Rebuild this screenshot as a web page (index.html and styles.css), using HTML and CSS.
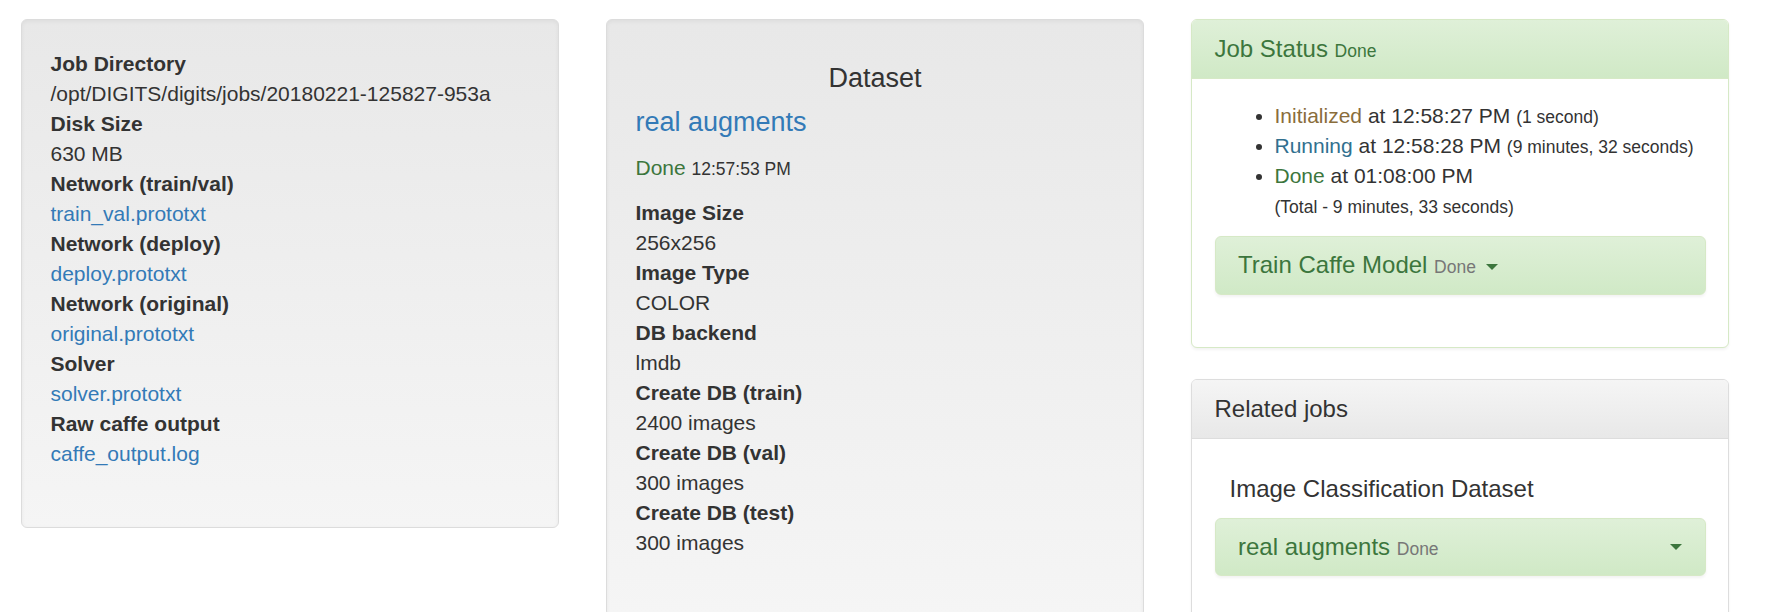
FILE: index.html
```html
<!DOCTYPE html>
<html>
<head>
<meta charset="utf-8">
<title>Job</title>
<link rel="stylesheet" href="styles.css">
</head>
<body>
<div class="page">
  <div class="col">
    <div class="well">
      <dl class="info">
        <dt>Job Directory</dt>
        <dd>/opt/DIGITS/digits/jobs/20180221-125827-953a</dd>
        <dt>Disk Size</dt>
        <dd>630 MB</dd>
        <dt>Network (train/val)</dt>
        <dd><a href="#">train_val.prototxt</a></dd>
        <dt>Network (deploy)</dt>
        <dd><a href="#">deploy.prototxt</a></dd>
        <dt>Network (original)</dt>
        <dd><a href="#">original.prototxt</a></dd>
        <dt>Solver</dt>
        <dd><a href="#">solver.prototxt</a></dd>
        <dt>Raw caffe output</dt>
        <dd><a href="#">caffe_output.log</a></dd>
      </dl>
    </div>
  </div>
  <div class="col">
    <div class="well">
      <h4 class="well-title">Dataset</h4>
      <h4 class="dataset-name"><a href="#">real augments</a></h4>
      <p class="status-line"><span class="text-success">Done</span> <small>12:57:53 PM</small></p>
      <dl class="info">
        <dt>Image Size</dt>
        <dd>256x256</dd>
        <dt>Image Type</dt>
        <dd>COLOR</dd>
        <dt>DB backend</dt>
        <dd>lmdb</dd>
        <dt>Create DB (train)</dt>
        <dd>2400 images</dd>
        <dt>Create DB (val)</dt>
        <dd>300 images</dd>
        <dt>Create DB (test)</dt>
        <dd>300 images</dd>
      </dl>
    </div>
  </div>
  <div class="col">
    <div class="panel panel-success status-panel">
      <div class="panel-heading">
        <h3 class="panel-title">Job Status <small>Done</small></h3>
      </div>
      <div class="panel-body">
        <ul class="status-list">
          <li><span class="text-warning">Initialized</span> at 12:58:27 PM <small>(1 second)</small></li>
          <li><span class="text-info">Running</span> at 12:58:28 PM <small>(9 minutes, 32 seconds)</small></li>
          <li><span class="text-success">Done</span> at 01:08:00 PM<br><small>(Total - 9 minutes, 33 seconds)</small></li>
        </ul>
        <div class="task-box">
          <span class="task-name">Train Caffe Model</span> <small>Done</small> <span class="caret"></span>
        </div>
      </div>
    </div>
    <div class="panel panel-default">
      <div class="panel-heading">
        <h3 class="panel-title">Related jobs</h3>
      </div>
      <div class="panel-body">
        <h4 class="related-type">Image Classification Dataset</h4>
        <div class="task-box task-box-split">
          <span><span class="task-name">real augments</span> <small>Done</small></span>
          <span class="caret"></span>
        </div>
      </div>
    </div>
  </div>
</div>
</body>
</html>
```
FILE: styles.css
```css
* {
  box-sizing: border-box;
}

html, body {
  margin: 0;
  padding: 0;
  background: #fff;
}

body {
  font-family: "Liberation Sans", Arial, sans-serif;
  font-size: 21px;
  line-height: 30px;
  color: #333;
}

a {
  color: #337ab7;
  text-decoration: none;
}

small {
  font-size: 17.5px;
  line-height: 1;
}

.page {
  display: flex;
  align-items: flex-start;
  gap: 47px;
  padding: 19px 41px 0 21px;
}

.col {
  flex: 0 0 538px;
  width: 538px;
}

.well {
  padding: 28.5px;
  border: 1px solid #dcdcdc;
  border-radius: 6px;
  background: linear-gradient(to bottom, #e8e8e8 0%, #f5f5f5 100%);
  box-shadow: inset 0 1.5px 4.5px rgba(0, 0, 0, 0.05), 0 1.5px 0 rgba(255, 255, 255, 0.1);
}

.info {
  margin: 0 0 30px;
}

.info dt {
  font-weight: bold;
}

.info dd {
  margin: 0;
}

.well-title,
.dataset-name {
  font-size: 27px;
  font-weight: normal;
  line-height: 1.1;
  margin: 15px 0;
}

.well-title {
  text-align: center;
}

.status-line {
  margin: 0 0 15px;
}

.status-line small {
  color: #333;
}

.text-success {
  color: #3c763d;
}

.text-warning {
  color: #8a6d3b;
}

.text-info {
  color: #31708f;
}

.panel {
  background: #fff;
  border: 1px solid #ddd;
  border-radius: 6px;
  margin-bottom: 30px;
  box-shadow: 0 1.5px 3px rgba(0, 0, 0, 0.05);
}

.status-panel {
  margin-bottom: 30.5px;
}

.panel-heading {
  padding: 16px 22.5px 15.5px;
  border-bottom: 1px solid #ddd;
  border-radius: 5px 5px 0 0;
}

.panel-title {
  margin: 0;
  font-size: 24px;
  font-weight: normal;
  line-height: 26.4px;
}

.panel-title small {
  font-size: 17.5px;
}

.panel-success {
  border-color: #d6e9c6;
}

.panel-success > .panel-heading {
  color: #3c763d;
  border-bottom-color: #d6e9c6;
  background: linear-gradient(to bottom, #dff0d8 0%, #d0e9c6 100%);
}

.panel-default > .panel-heading {
  color: #333;
  background: linear-gradient(to bottom, #f5f5f5 0%, #e8e8e8 100%);
}

.panel-body {
  padding: 22.5px;
}

.status-list {
  margin: 0 0 15px;
  padding-left: 60px;
}

.task-box {
  padding: 15px 22.5px;
  border: 1px solid #d6e9c6;
  border-radius: 6px;
  background: linear-gradient(to bottom, #dff0d8 0%, #d0e9c6 100%);
  box-shadow: 0 1.5px 3px rgba(0, 0, 0, 0.05);
  color: #3c763d;
  font-size: 24px;
  line-height: 26.4px;
  height: 58.4px;
  margin-bottom: 30px;
}

.task-box small {
  color: #777;
  font-size: 17.5px;
}

.task-box-split {
  display: flex;
  justify-content: space-between;
  align-items: center;
}

.caret {
  display: inline-block;
  width: 0;
  height: 0;
  margin-left: 3px;
  vertical-align: middle;
  border-top: 6px solid #3c763d;
  border-left: 6px solid transparent;
  border-right: 6px solid transparent;
}

.task-box-split .caret {
  margin-left: 0;
}

.related-type {
  margin: 15px 0;
  padding-left: 15px;
  font-size: 24px;
  font-weight: normal;
  line-height: 1.1;
  color: #333;
}
```
